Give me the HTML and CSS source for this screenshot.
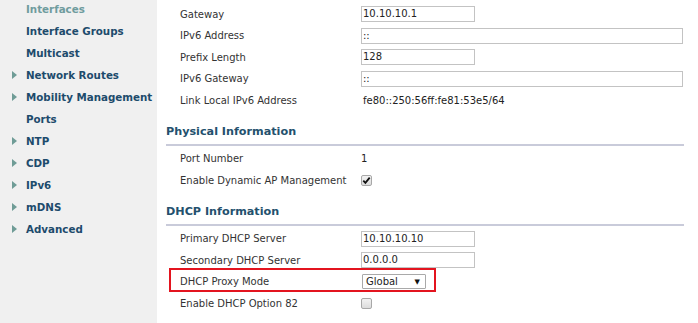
FILE: index.html
```html
<!DOCTYPE html>
<html>
<head>
<meta charset="utf-8">
<link rel="stylesheet" href="styles.css">
</head>
<body>
<div class="page">
  <nav class="side">
    <ul class="menu">
      <li class="item active">Interfaces</li>
      <li class="item">Interface Groups</li>
      <li class="item">Multicast</li>
      <li class="item has-sub">Network Routes</li>
      <li class="item has-sub">Mobility Management</li>
      <li class="item">Ports</li>
      <li class="item has-sub">NTP</li>
      <li class="item has-sub">CDP</li>
      <li class="item has-sub">IPv6</li>
      <li class="item has-sub">mDNS</li>
      <li class="item has-sub">Advanced</li>
    </ul>
  </nav>
  <main class="content">
    <div class="rows first">
      <div class="row"><span class="label">Gateway</span><span class="field"><span class="input">10.10.10.1</span></span></div>
      <div class="row"><span class="label">IPv6 Address</span><span class="field"><span class="input wide">::</span></span></div>
      <div class="row"><span class="label">Prefix Length</span><span class="field"><span class="input">128</span></span></div>
      <div class="row"><span class="label">IPv6 Gateway</span><span class="field"><span class="input wide">::</span></span></div>
      <div class="row"><span class="label">Link Local IPv6 Address</span><span class="field value">fe80::250:56ff:fe81:53e5/64</span></div>
    </div>

    <h2 class="section">Physical Information</h2>
    <div class="rows">
      <div class="row"><span class="label">Port Number</span><span class="field value num">1</span></div>
      <div class="row"><span class="label">Enable Dynamic AP Management</span><span class="field"><span class="check checked"><svg viewBox="0 0 11 11" width="11" height="11"><path d="M2.3 5.6 L4.4 7.9 L8.7 2.6" fill="none" stroke="#111" stroke-width="1.8"/></svg></span></span></div>
    </div>

    <h2 class="section">DHCP Information</h2>
    <div class="rows">
      <div class="row"><span class="label">Primary DHCP Server</span><span class="field"><span class="input">10.10.10.10</span></span></div>
      <div class="row"><span class="label">Secondary DHCP Server</span><span class="field"><span class="input">0.0.0.0</span></span></div>
      <div class="row highlight"><span class="label">DHCP Proxy Mode</span><span class="field"><span class="select"><span class="sel-text">Global</span><span class="sel-arrow">▼</span></span></span></div>
      <div class="row"><span class="label">Enable DHCP Option 82</span><span class="field"><span class="check"></span></span></div>
    </div>
  </main>
</div>
</body>
</html>
```

FILE: styles.css
```css
html, body {
  margin: 0;
  padding: 0;
  background: #ffffff;
  overflow: hidden;
}

body {
  font-family: "DejaVu Sans", Verdana, sans-serif;
  font-size: 10px;
  color: #333333;
}

.page {
  display: flex;
  width: 698px;
  height: 323px;
}

.side {
  width: 157px;
  flex: 0 0 157px;
  background: #f0f0f0;
}

.menu {
  list-style: none;
  margin: -2px 0 0 0;
  padding: 0;
}

.item {
  height: 22px;
  display: flex;
  align-items: center;
  padding-left: 26px;
  position: relative;
  font-weight: bold;
  font-size: 10.3px;
  color: #1d4b6c;
  white-space: nowrap;
}

.item.active {
  color: #6f9c9e;
}

.item.has-sub::before {
  content: "";
  position: absolute;
  left: 12px;
  top: 7px;
  border-top: 4px solid transparent;
  border-bottom: 4px solid transparent;
  border-left: 5px solid #6f9c96;
}

.content {
  flex: 1;
  padding: 3px 14px 0 9px;
}

.rows {
  display: flex;
  flex-direction: column;
  margin-top: 2px;
}

.rows.first {
  margin-top: 0.25px;
}

.row {
  height: 21.5px;
  display: grid;
  grid-template-columns: 181px 1fr;
  align-items: center;
  padding-left: 14px;
  position: relative;
  white-space: nowrap;
}

.label {
  color: #333333;
}

.field {
  display: flex;
  align-items: center;
}

.value {
  color: #222222;
  padding-left: 2px;
}

.value.num {
  padding-left: 0;
}

.input {
  box-sizing: border-box;
  width: 114px;
  height: 16px;
  border: 1px solid #c3c3c3;
  padding: 0 2px 0 1px;
  line-height: 14px;
  color: #222222;
  background: #ffffff;
}

.input.wide {
  width: 322px;
}

.section {
  margin: 13px 0 0 0;
  height: 16px;
  line-height: 16px;
  padding-bottom: 4px;
  border-bottom: 2px solid #c9cbda;
  font-size: 11.2px;
  font-weight: bold;
  color: #23506d;
}

.check {
  box-sizing: border-box;
  width: 11px;
  height: 11px;
  border: 1px solid #a8a8a8;
  border-radius: 2px;
  background: linear-gradient(#f2f2f2, #dcdcdc);
  display: flex;
  align-items: center;
  justify-content: center;
  margin-top: 1px;
}

.check svg {
  display: block;
  margin: -1px;
}

.select {
  box-sizing: border-box;
  width: 64px;
  height: 15px;
  margin-left: 1px;
  border: 1px solid #a9a9a9;
  border-radius: 1px;
  background: #ffffff;
  display: flex;
  align-items: center;
  justify-content: space-between;
  padding: 0 5px 0 3px;
  color: #222222;
}

.sel-arrow {
  font-size: 7px;
  color: #111111;
}

.highlight::before {
  content: "";
  position: absolute;
  left: 3px;
  top: -3px;
  width: 267px;
  height: 24px;
  box-sizing: border-box;
  border: 2px solid #e3141f;
  pointer-events: none;
}
```
